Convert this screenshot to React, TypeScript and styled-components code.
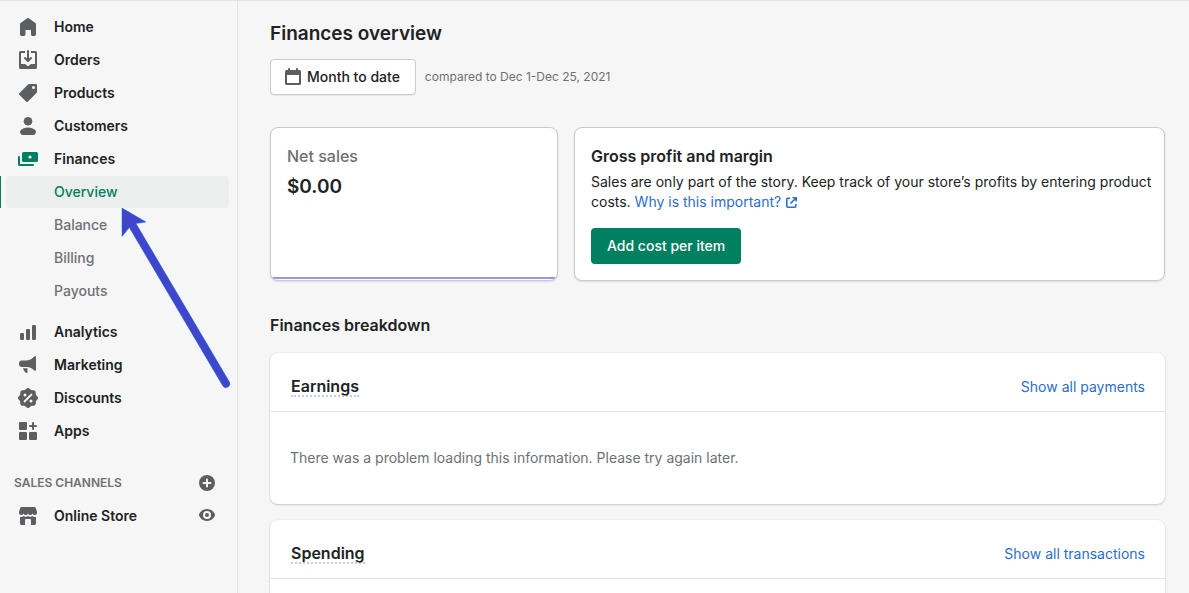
import React from "react";
import styled, { createGlobalStyle, css } from "styled-components";

const color = {
  page: "#f6f6f6",
  surface: "#ffffff",
  text: "#202223",
  subdued: "#6d7175",
  icon: "#5c5f62",
  green: "#008060",
  link: "#2c6ecb",
  line: "#e1e3e5",
};

const GlobalStyle = createGlobalStyle`
  *, *::before, *::after { box-sizing: border-box; }
  body {
    margin: 0;
    background: ${color.page};
    color: ${color.text};
    font-family: Inter, "Liberation Sans", sans-serif;
    font-size: 14px;
    line-height: 20px;
  }
  h1, h2, h3, p, ul { margin: 0; padding: 0; }
  a { text-decoration: none; }
  button { font: inherit; cursor: pointer; }
`;

const Shell = styled.div`
  position: relative;
  display: flex;
  height: 100vh;
  overflow: hidden;
  border-top: 1px solid ${color.line};
`;

const Sidebar = styled.nav`
  flex: none;
  width: 238px;
  padding: 10px 8px 0 0;
  border-right: 1px solid ${color.line};
`;

const NavList = styled.ul`
  display: flex;
  flex-direction: column;
  gap: 1px;
  list-style: none;
`;

const NavGroup = styled.li<{ $spaced?: boolean }>`
  margin-bottom: ${(p) => (p.$spaced ? 8 : 0)}px;
`;

const SubList = styled(NavList)`
  padding-top: 1px;
`;

const NavLink = styled.a`
  display: flex;
  align-items: center;
  gap: 16px;
  height: 32px;
  padding-left: 18px;
  color: ${color.text};
  font-weight: 600;
`;

const SubItem = styled.li<{ $active?: boolean }>`
  display: flex;
  gap: 5px;
  padding-left: ${(p) => (p.$active ? 0 : 6)}px;

  ${(p) =>
    p.$active &&
    css`
      &::before {
        content: "";
        width: 1px;
        background: ${color.green};
      }
    `}
`;

const SubLink = styled.a<{ $active?: boolean }>`
  flex: 1;
  height: 32px;
  padding: 6px 0 6px 48px;
  border-radius: 4px;
  color: ${(p) => (p.$active ? color.green : color.subdued)};
  background: ${(p) => (p.$active ? "#edeeee" : "transparent")};
  font-weight: 500;
`;

const ChannelHeader = styled.div`
  display: flex;
  align-items: center;
  justify-content: space-between;
  height: 32px;
  margin: 20px 0 1px;
  padding: 0 12px 0 14px;
`;

const ChannelTitle = styled.h2`
  color: ${color.subdued};
  font-size: 12px;
  line-height: 16px;
  font-weight: 600;
`;

const ChannelRow = styled.div`
  display: flex;
  align-items: center;
  justify-content: space-between;
  padding-right: 12px;
`;

const IconButton = styled.button`
  display: flex;
  padding: 0;
  border: 0;
  background: none;
  color: ${color.icon};
`;

const IconSvg = styled.svg<{ $color?: string }>`
  flex: none;
  fill: ${(p) => p.$color ?? color.icon};
`;

const Main = styled.main`
  flex: 1;
  min-width: 0;
  padding: 18px 24px 0 32px;
`;

const PageTitle = styled.h1`
  font-size: 19px;
  line-height: 30px;
  font-weight: 600;
`;

const Filters = styled.div`
  display: flex;
  align-items: center;
  gap: 9px;
  margin: 10px 0 32px;
`;

const DateButton = styled.button`
  display: flex;
  align-items: center;
  gap: 4px;
  height: 36px;
  padding: 0 15px 0 12px;
  border: 1px solid #c9cccf;
  border-radius: 4px;
  background: ${color.surface};
  color: ${color.text};
  font-weight: 500;
  box-shadow: 0 1px 0 rgba(0, 0, 0, 0.05);
`;

const Compared = styled.span`
  color: ${color.subdued};
  font-size: 12px;
`;

const Summary = styled.div`
  display: grid;
  grid-template-columns: 288fr 591fr;
  gap: 16px;
`;

const Tile = styled.section<{ $accent?: boolean }>`
  display: flex;
  flex-direction: column;
  align-items: flex-start;
  min-height: 154px;
  padding: 18px 8px 16px 16px;
  overflow: hidden;
  border: 1px solid #c9cccf;
  border-radius: 8px;
  background: ${color.surface};
  box-shadow: 0 1px 2px rgba(0, 0, 0, 0.12);

  ${(p) =>
    p.$accent &&
    css`
      background: linear-gradient(#a78df0, #a78df0) left 0 bottom 1px / 100% 2px no-repeat
        ${color.surface};
    `}
`;

const TileTitle = styled.h2<{ $subdued?: boolean }>`
  margin-bottom: 6px;
  color: ${(p) => (p.$subdued ? color.subdued : color.text)};
  font-size: 16px;
  line-height: 20px;
  font-weight: ${(p) => (p.$subdued ? 500 : 600)};
`;

const Amount = styled.p`
  font-size: 19px;
  line-height: 30px;
  font-weight: 600;
`;

const TextLink = styled.a`
  color: ${color.link};
`;

const ExternalIcon = styled.svg`
  margin-left: 5px;
  vertical-align: -1px;
  fill: none;
  stroke: ${color.link};
  stroke-width: 1.6;
`;

const PrimaryButton = styled.button`
  height: 36px;
  margin-top: 16px;
  padding: 0 16px;
  border: 0;
  border-radius: 4px;
  background: ${color.green};
  color: #fff;
  font-weight: 500;
`;

const SectionTitle = styled.h2`
  margin: 34px 0 18px;
  font-size: 16px;
  line-height: 20px;
  font-weight: 600;
`;

const Card = styled.section`
  margin-bottom: 16px;
  border-radius: 8px;
  background: ${color.surface};
  box-shadow: 0 0 2px rgba(23, 24, 24, 0.08), 0 1px 2px rgba(0, 0, 0, 0.18);
`;

const CardHeader = styled.header`
  display: flex;
  align-items: center;
  justify-content: space-between;
  padding: 24px 20px 14px 21px;
  border-bottom: 1px solid ${color.line};
`;

const CardTitle = styled.h3`
  border-bottom: 2px dotted #c4cdd9;
  font-size: 16px;
  line-height: 18px;
  font-weight: 600;
`;

const CardBody = styled.p`
  padding: 36px 20px;
  color: ${color.subdued};
`;

const Pointer = styled.svg`
  position: absolute;
  top: 206px;
  left: 120px;
  pointer-events: none;
`;

const badgePath = (() => {
  const points: string[] = [];
  for (let i = 0; i <= 96; i++) {
    const a = (i / 96) * Math.PI * 2;
    const r = 9.3 + 0.7 * Math.cos(8 * a);
    points.push(`${(10 + r * Math.cos(a)).toFixed(2)} ${(10 + r * Math.sin(a)).toFixed(2)}`);
  }
  return `M${points.join("L")}Z`;
})();

const icons = {
  home: (
    <path d="M18 7.26V17.5c0 .84-.67 1.5-1.5 1.5h-2c-.83 0-1.5-.66-1.5-1.5V13H7.500v4.480C7.500 18.320 6.330 19 5.500 19h-2c-.83 0-1.500-.68-1.500-1.520V7.260a1.500 1.500 0 01.620-1.210l6.590-4.820a1.480 1.480 0 011.590 0l6.590 4.820A1.500 1.500 0 0118 7.260z" />
  ),
  orders: (
    <>
      <path d="M11 1a1 1 0 10-2 0v7.586L7.707 7.293a1 1 0 00-1.414 1.414l3 3a1 1 0 001.414 0l3-3a1 1 0 00-1.414-1.414L11 8.586V1z" />
      <path d="M3 14V3h4V1H2.500A1.500 1.500 0 001 2.500v15A1.500 1.500 0 002.500 19h15a1.500 1.500 0 001.500-1.500v-15A1.500 1.500 0 0017.500 1H13v2h4v11h-3.500c-.775 0-1.388.662-1.926 1.244l-.11.12A1.994 1.994 0 0110 16a1.994 1.994 0 01-1.463-.637l-.111-.12C7.888 14.664 7.275 14 6.500 14H3z" />
    </>
  ),
  products: (
    <path
      fillRule="evenodd"
      d="M10.293 1.293A1 1 0 0111 1h7a1 1 0 011 1v7a1 1 0 01-.293.707l-9 9a1 1 0 01-1.414 0l-7-7a1 1 0 010-1.414l9-9zM15.500 6a1.500 1.500 0 100-3 1.500 1.500 0 000 3z"
    />
  ),
  customers: (
    <>
      <circle cx="10" cy="5.200" r="4.300" />
      <path d="M10 11.600c-3.700 0-6.300 1.500-7.400 2.900-.9 1.100-.6 2.500.1 3.300.6.800 1.300 1.200 2.300 1.200h10c1 0 1.700-.4 2.300-1.200.7-.8 1-2.200.1-3.300-1.100-1.400-3.700-2.900-7.400-2.900z" />
    </>
  ),
  finances: (
    <>
      <path
        fillRule="evenodd"
        d="M5.500 3h13A1.500 1.500 0 0120 4.500v7a1.500 1.500 0 01-1.500 1.500h-13A1.500 1.500 0 014 11.500v-7A1.500 1.500 0 015.500 3zM12 9.600a1.600 1.600 0 100-3.200 1.600 1.600 0 000 3.200z"
      />
      <path d="M0 8a1 1 0 012 0v7h13a1 1 0 010 2H1.500A1.500 1.500 0 010 15.500z" />
    </>
  ),
  analytics: (
    <>
      <rect x="2" y="11" width="4" height="7" rx="1.300" />
      <rect x="8" y="7" width="4" height="11" rx="1.300" />
      <rect x="14" y="3" width="4" height="15" rx="1.300" />
    </>
  ),
  marketing: (
    <>
      <path d="M18 1.900v13.200c0 .7-.7 1-1.200.7C14.200 13.400 12 12.200 8.500 12H4a3 3 0 01-3-3v-.5a3 3 0 013-3h4.500c3.500-.2 5.700-1.900 8.300-4.200.5-.4 1.200-.1 1.200.6z" />
      <path d="M5 13.300h4.500v3.900c0 .7-.8 1-1.300.7-1.700-1-2.700-2.500-3.200-4.600z" />
    </>
  ),
  discounts: (
    <>
      <path d={badgePath} />
      <circle cx="7" cy="7" r="1.500" fill={color.page} />
      <circle cx="13" cy="13" r="1.500" fill={color.page} />
      <path d="M13.500 6.500l-7 7" stroke={color.page} strokeWidth="1.800" strokeLinecap="round" />
    </>
  ),
  apps: (
    <>
      <rect x="1" y="1" width="8" height="8" rx="1" />
      <rect x="1" y="11" width="8" height="8" rx="1" />
      <rect x="11" y="11" width="8" height="8" rx="1" />
      <path d="M14 2a1 1 0 012 0v2h2a1 1 0 010 2h-2v2a1 1 0 01-2 0V6h-2a1 1 0 010-2h2z" />
    </>
  ),
  store: (
    <>
      <path d="M3.500 1h13c.6 0 1.100.3 1.300.9L19 6v.7c0 1.300-1 2.300-2.200 2.300-1.200 0-2.200-.8-2.300-1.800C14.400 8.200 13.500 9 12.300 9 11.100 9 10.100 8.200 10 7.200 9.900 8.200 8.900 9 7.700 9 6.500 9 5.600 8.200 5.500 7.200 5.400 8.200 4.400 9 3.200 9 2 9 1 8 1 6.700V6l1.200-4.100c.2-.6.7-.9 1.300-.9z" />
      <path d="M2 10.700c2.200.5 3.200-.1 3.700-.6 1.100 1 2.900 1.100 4.300 0 1.400 1.100 3.200 1 4.300 0 .5.5 1.500 1.100 3.700.6v6.800c0 .8-.7 1.500-1.500 1.500H13v-5a1 1 0 00-1-1H8a1 1 0 00-1 1v5H3.500c-.8 0-1.500-.7-1.500-1.500z" />
    </>
  ),
  add: (
    <path
      fillRule="evenodd"
      d="M10 2a8 8 0 100 16 8 8 0 000-16zM9 6.500a1 1 0 012 0V9h2.500a1 1 0 010 2H11v2.500a1 1 0 01-2 0V11H6.500a1 1 0 010-2H9z"
    />
  ),
  view: (
    <path
      fillRule="evenodd"
      d="M10 3c-4.300 0-7 2.800-7.900 5.300-.2.400-.2.900 0 1.300C3 12.200 5.700 15 10 15s7-2.800 7.900-5.400c.2-.4.2-.9 0-1.300C17 5.800 14.300 3 10 3zm0 10a4 4 0 110-8 4 4 0 010 8zM10 11a2 2 0 100-4 2 2 0 000 4z"
    />
  ),
  calendar: (
    <path
      fillRule="evenodd"
      d="M5 2a1 1 0 012 0v1h6V2a1 1 0 012 0v1h1.500A1.500 1.500 0 0118 4.500v12a1.500 1.500 0 01-1.500 1.500h-13A1.500 1.500 0 012 16.500v-12A1.500 1.500 0 013.500 3H5zM4 8v8h12V8z"
    />
  ),
};

type IconName = keyof typeof icons;

const Icon = ({ name, tint }: { name: IconName; tint?: string }) => (
  <IconSvg width="20" height="20" viewBox="0 0 20 20" $color={tint} aria-hidden="true">
    {icons[name]}
  </IconSvg>
);

type NavEntry = { label: string; icon: IconName; children?: string[] };

const navigation: NavEntry[] = [
  { label: "Home", icon: "home" },
  { label: "Orders", icon: "orders" },
  { label: "Products", icon: "products" },
  { label: "Customers", icon: "customers" },
  { label: "Finances", icon: "finances", children: ["Overview", "Balance", "Billing", "Payouts"] },
  { label: "Analytics", icon: "analytics" },
  { label: "Marketing", icon: "marketing" },
  { label: "Discounts", icon: "discounts" },
  { label: "Apps", icon: "apps" },
];

const Navigation = () => (
  <Sidebar aria-label="Main">
    <NavList>
      {navigation.map(({ label, icon, children }) => (
        <NavGroup key={label} $spaced={!!children}>
          <NavLink href="#">
            <Icon name={icon} tint={children ? color.green : undefined} />
            {label}
          </NavLink>
          {children && (
            <SubList>
              {children.map((child, i) => (
                <SubItem key={child} $active={i === 0}>
                  <SubLink href="#" $active={i === 0}>
                    {child}
                  </SubLink>
                </SubItem>
              ))}
            </SubList>
          )}
        </NavGroup>
      ))}
    </NavList>
    <ChannelHeader>
      <ChannelTitle>SALES CHANNELS</ChannelTitle>
      <IconButton aria-label="Add sales channel">
        <Icon name="add" />
      </IconButton>
    </ChannelHeader>
    <ChannelRow>
      <NavLink href="#">
        <Icon name="store" />
        Online Store
      </NavLink>
      <IconButton aria-label="View online store">
        <Icon name="view" />
      </IconButton>
    </ChannelRow>
  </Sidebar>
);

const BreakdownCard = ({ title, action, message }: { title: string; action: string; message?: string }) => (
  <Card>
    <CardHeader>
      <CardTitle>{title}</CardTitle>
      <TextLink href="#">{action}</TextLink>
    </CardHeader>
    <CardBody>{message}</CardBody>
  </Card>
);

export default function App() {
  return (
    <>
      <GlobalStyle />
      <Shell>
        <Navigation />
        <Main>
          <PageTitle>Finances overview</PageTitle>
          <Filters>
            <DateButton>
              <Icon name="calendar" />
              Month to date
            </DateButton>
            <Compared>compared to Dec 1-Dec 25, 2021</Compared>
          </Filters>
          <Summary>
            <Tile $accent>
              <TileTitle $subdued>Net sales</TileTitle>
              <Amount>$0.00</Amount>
            </Tile>
            <Tile>
              <TileTitle>Gross profit and margin</TileTitle>
              <p>
                Sales are only part of the story. Keep track of your store’s profits by entering product
                costs.{" "}
                <TextLink href="#">
                  Why is this important?
                  <ExternalIcon width="11" height="11" viewBox="0 0 11 11" aria-hidden="true">
                    <path d="M4 1.200H1.800a1 1 0 00-1 1v7a1 1 0 001 1h7a1 1 0 001-1V7M6.500.8h3.700v3.700M10 1L4.500 6.500" />
                  </ExternalIcon>
                </TextLink>
              </p>
              <PrimaryButton>Add cost per item</PrimaryButton>
            </Tile>
          </Summary>
          <SectionTitle>Finances breakdown</SectionTitle>
          <BreakdownCard
            title="Earnings"
            action="Show all payments"
            message="There was a problem loading this information. Please try again later."
          />
          <BreakdownCard title="Spending" action="Show all transactions" />
        </Main>
        <Pointer width="114" height="184" viewBox="0 0 114 184" aria-hidden="true">
          <g stroke="#5cc8fa" strokeWidth="1" fill="#4046cc" paintOrder="stroke">
            <path d="M2 1L26 15 16 16.500 109.300 174.800a3.800 3.800 0 01-6.600 3.900L9.300 20.500 2 29.500z" />
          </g>
        </Pointer>
      </Shell>
    </>
  );
}
